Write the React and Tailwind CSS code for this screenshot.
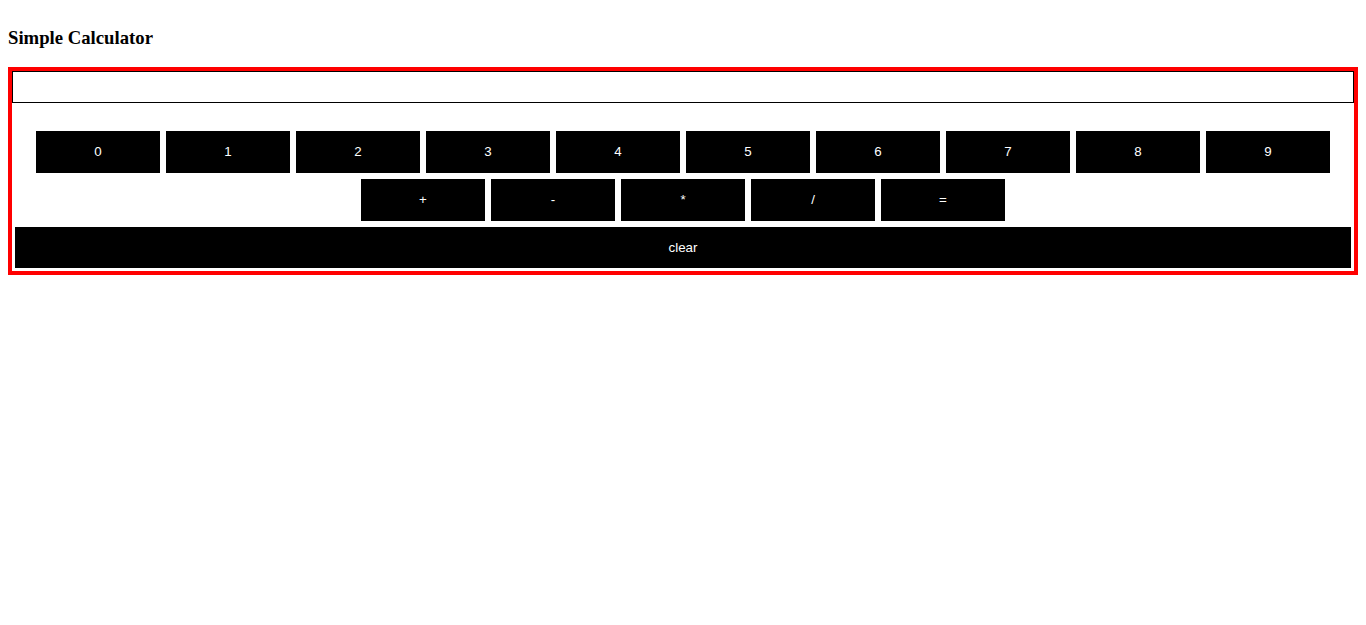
import React, { useState } from 'react';

const digits = ['0', '1', '2', '3', '4', '5', '6', '7', '8', '9'];
const ops = ['+', '-', '*', '/', '='];

function Key({ label, onClick }) {
  return (
    <button
      onClick={onClick}
      className="m-[3px] flex h-[42px] w-[124px] items-center justify-center bg-black text-[13.33px] text-white"
    >
      {label}
    </button>
  );
}

export default function App() {
  const [value, setValue] = useState('');

  const press = (k) => {
    if (k === '=') {
      try {
        // eslint-disable-next-line no-new-func
        setValue(String(Function(`return (${value})`)()));
      } catch {
        setValue('Error');
      }
      return;
    }
    setValue((v) => v + k);
  };

  return (
    <div className="min-h-screen bg-white px-2 font-['Liberation_Sans',Arial,sans-serif] text-black">
      <h3 className="pt-[27px] mb-[18px] font-['Liberation_Serif','Times_New_Roman',serif] text-[18.72px] font-bold leading-[22px]">
        Simple Calculator
      </h3>

      <div className="border-4 border-[#ff0000]">
        <input
          type="text"
          value={value}
          onChange={(e) => setValue(e.target.value)}
          className="block h-[32px] w-full border border-black px-1 text-[13.33px] outline-none"
        />

        <div className="mt-[25px] flex justify-center">
          {digits.map((d) => (
            <Key key={d} label={d} onClick={() => press(d)} />
          ))}
        </div>
        <div className="flex justify-center">
          {ops.map((o) => (
            <Key key={o} label={o} onClick={() => press(o)} />
          ))}
        </div>
        <button
          onClick={() => setValue('')}
          className="m-[3px] flex h-[41px] w-[calc(100%-6px)] items-center justify-center bg-black text-[13.33px] text-white"
        >
          clear
        </button>
      </div>
    </div>
  );
}
